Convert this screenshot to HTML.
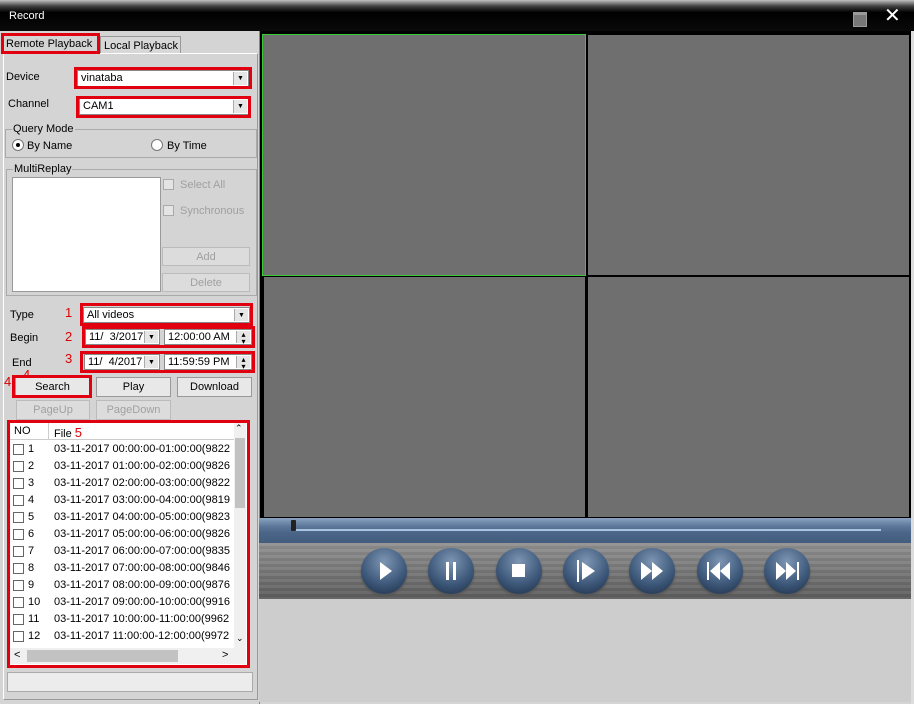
<!DOCTYPE html><html><head><style>
body{margin:0;width:914px;height:704px;overflow:hidden;background:#d4d4d4;font-family:"Liberation Sans",sans-serif;font-size:11px;color:#000;position:relative}
.a{position:absolute}
.red{position:absolute;border:3px solid #e00010;box-sizing:border-box}
.btn{position:absolute;background:#e8e8e8;border:1px solid #999;box-sizing:border-box;text-align:center;line-height:18px}
.dis{color:#a0a0a0;background:#dcdcdc;border-color:#bbb}
.inp{position:absolute;background:#fff;border:1px solid #888;box-sizing:border-box;padding-left:3px;line-height:15px}
.dd{position:absolute;right:1px;top:1px;width:13px;bottom:1px;background:#e6e6e6;border-left:1px solid #aaa;font-size:7px;text-align:center;line-height:14px}
.cb{position:absolute;width:11px;height:11px;border:1px solid #777;background:#fff;box-sizing:border-box}
.cell{position:absolute;background:#6f6f6f}
.circ{position:absolute;top:548px;width:46px;height:46px;border-radius:50%;background:radial-gradient(circle at 50% 30%,#7e96b4 0%,#3f5a7c 55%,#2b405c 80%,#8fb0d0 100%);box-shadow:0 2px 2px #555}
.circ svg{position:absolute;left:0;top:0}
.row{position:absolute;left:13px;height:17px;line-height:17px;width:220px;white-space:nowrap}
</style></head><body>
<div class="a" style="left:0;top:0;width:914px;height:31px;background:linear-gradient(#c0c0c0,#404040 20%,#000 40%,#0a0a0a)"></div>
<div class="a" style="left:9px;top:10px;color:#fff;font-size:11px">Record</div>
<div class="a" style="left:853px;top:12px;width:12px;height:11px;background:#777;border:1px solid #999;border-top-width:3px"></div>
<div class="a" style="left:884px;top:6px;color:#fff;font-size:20px;line-height:20px">✕</div>

<div class="a" style="left:0;top:31px;width:259px;height:673px;background:#d4d4d4;border-right:1px solid #888"></div>
<div class="a" style="left:100px;top:36px;width:76px;height:17px;border:1px solid #999;border-bottom:none;background:#d8d8d8;line-height:19px;padding-left:3px">Local Playback</div>
<div class="a" style="left:3px;top:53px;width:253px;height:645px;border:1px solid #fff;border-right-color:#999;border-bottom-color:#999"></div>
<div class="red" style="left:1px;top:33px;width:99px;height:21px"></div>
<div class="a" style="left:6px;top:38px">Remote Playback</div>

<div class="a" style="left:6px;top:71px">Device</div>
<div class="inp" style="left:77px;top:70px;width:172px;height:17px">vinataba<div class="dd">▼</div></div>
<div class="red" style="left:74px;top:67px;width:178px;height:22px"></div>
<div class="a" style="left:8px;top:98px">Channel</div>
<div class="inp" style="left:79px;top:98px;width:170px;height:17px">CAM1<div class="dd">▼</div></div>
<div class="red" style="left:76px;top:96px;width:175px;height:22px"></div>

<div class="a" style="left:5px;top:129px;width:250px;height:27px;border:1px solid #aaa"></div>
<div class="a" style="left:12px;top:123px;background:#d4d4d4;padding:0 1px">Query Mode</div>
<div class="a" style="left:12px;top:139px;width:10px;height:10px;border-radius:50%;background:#fff;border:1px solid #777"></div>
<div class="a" style="left:16px;top:143px;width:4px;height:4px;border-radius:50%;background:#000"></div>
<div class="a" style="left:27px;top:140px">By Name</div>
<div class="a" style="left:151px;top:139px;width:10px;height:10px;border-radius:50%;background:#fff;border:1px solid #777"></div>
<div class="a" style="left:167px;top:140px">By Time</div>

<div class="a" style="left:6px;top:169px;width:249px;height:125px;border:1px solid #aaa"></div>
<div class="a" style="left:13px;top:163px;background:#d4d4d4;padding:0 1px">MultiReplay</div>
<div class="a" style="left:12px;top:177px;width:147px;height:113px;background:#fff;border:1px solid #999"></div>
<div class="cb" style="left:163px;top:179px;background:#e4e4e4;border-color:#aaa"></div>
<div class="a" style="left:180px;top:179px;color:#a0a0a0">Select All</div>
<div class="cb" style="left:163px;top:205px;background:#e4e4e4;border-color:#aaa"></div>
<div class="a" style="left:180px;top:205px;color:#a0a0a0">Synchronous</div>
<div class="btn dis" style="left:162px;top:247px;width:88px;height:19px">Add</div>
<div class="btn dis" style="left:162px;top:273px;width:88px;height:19px">Delete</div>

<div class="a" style="left:10px;top:309px">Type</div>
<div class="a" style="left:65px;top:305px;color:#d00;font-size:13px">1</div>
<div class="inp" style="left:83px;top:307px;width:167px;height:16px">All videos<div class="dd">▼</div></div>
<div class="red" style="left:80px;top:303px;width:173px;height:23px"></div>
<div class="a" style="left:10px;top:332px">Begin</div>
<div class="a" style="left:65px;top:329px;color:#d00;font-size:13px">2</div>
<div class="inp" style="left:85px;top:329px;width:75px;height:16px">11/&nbsp; 3/2017<div class="dd">▼</div></div>
<div class="inp" style="left:164px;top:329px;width:88px;height:16px">12:00:00 AM<div class="dd" style="font-size:8px;line-height:7px">▴<br>▾</div></div>
<div class="red" style="left:82px;top:326px;width:173px;height:22px"></div>
<div class="a" style="left:12px;top:357px">End</div>
<div class="a" style="left:65px;top:351px;color:#d00;font-size:13px">3</div>
<div class="inp" style="left:84px;top:354px;width:76px;height:16px">11/&nbsp; 4/2017<div class="dd">▼</div></div>
<div class="inp" style="left:164px;top:354px;width:88px;height:16px">11:59:59 PM<div class="dd" style="font-size:8px;line-height:7px">▴<br>▾</div></div>
<div class="red" style="left:80px;top:351px;width:175px;height:22px"></div>

<div class="a" style="left:4px;top:374px;color:#d00;font-size:13px">4</div>
<div class="a" style="left:23px;top:367px;color:#d00;font-size:13px">4</div>
<div class="btn" style="left:15px;top:377px;width:75px;height:20px">Search</div>
<div class="red" style="left:12px;top:375px;width:80px;height:23px"></div>
<div class="btn" style="left:96px;top:377px;width:75px;height:20px">Play</div>
<div class="btn" style="left:177px;top:377px;width:75px;height:20px">Download</div>
<div class="btn dis" style="left:16px;top:400px;width:74px;height:20px">PageUp</div>
<div class="btn dis" style="left:96px;top:400px;width:75px;height:20px">PageDown</div>

<div class="a" style="left:9px;top:422px;width:238px;height:244px;background:#fff"></div>
<div class="a" style="left:10px;top:423px;width:224px;height:16px;background:#fff;border-bottom:1px solid #ccc"></div>
<div class="a" style="left:48px;top:423px;width:1px;height:16px;background:#ccc"></div>
<div class="a" style="left:14px;top:425px">NO</div>
<div class="a" style="left:54px;top:425px">File <span style="color:#d00;font-size:13px">5</span></div>
<div class="a" style="left:234px;top:423px;width:12px;height:225px;background:#f0f0f0"></div>
<div class="a" style="left:235px;top:438px;width:10px;height:70px;background:#c2c2c2"></div>
<div class="a" style="left:235px;top:423px;font-size:9px">⌃</div>
<div class="a" style="left:236px;top:633px;font-size:9px">⌄</div>
<div class="a" style="left:10px;top:648px;width:236px;height:16px;background:#f0f0f0"></div>
<div class="a" style="left:27px;top:650px;width:151px;height:12px;background:#c2c2c2"></div>
<div class="a" style="left:14px;top:649px">&lt;</div>
<div class="a" style="left:222px;top:649px">&gt;</div>
<div id="rows"></div>
<div class="red" style="left:7px;top:420px;width:243px;height:248px"></div>
<div class="a" style="left:7px;top:672px;width:244px;height:18px;background:#ececec;border:1px solid #aaa"></div>

<div class="a" style="left:260px;top:31px;width:654px;height:489px;background:#000"></div>
<div class="a" style="left:911px;top:31px;width:3px;height:673px;background:#ddd"></div>
<div class="cell" style="left:263px;top:35px;width:322px;height:240px;outline:1px solid #3c3"></div>
<div class="cell" style="left:588px;top:35px;width:321px;height:240px"></div>
<div class="cell" style="left:264px;top:277px;width:321px;height:240px"></div>
<div class="cell" style="left:588px;top:277px;width:321px;height:240px"></div>
<div class="a" style="left:259px;top:518px;width:652px;height:25px;background:linear-gradient(#8aa3c2,#5a7597 35%,#4a6587 60%,#435d7e)"></div>
<div class="a" style="left:292px;top:529px;width:589px;height:2px;background:#a8c4e2"></div>
<div class="a" style="left:291px;top:520px;width:5px;height:11px;background:#222;border-radius:1px"></div>
<div class="a" style="left:259px;top:543px;width:652px;height:56px;background:linear-gradient(#909090,#7c7c7c 40%,#5c5c5c)"></div>
<div class="a" style="left:259px;top:543px;width:652px;height:56px;background:repeating-linear-gradient(rgba(255,255,255,0.06) 0,rgba(255,255,255,0.06) 3px,rgba(0,0,0,0.04) 3px,rgba(0,0,0,0.04) 6px)"></div>
<div class="a" style="left:259px;top:599px;width:652px;height:103px;background:#cdcdcd"></div>

<div class="circ" style="left:361px"><svg width="46" height="46"><path d="M19 14 L31 23 L19 32Z" fill="#fff"/></svg></div>
<div class="circ" style="left:428px"><svg width="46" height="46"><rect x="18" y="14" width="3" height="18" fill="#fff"/><rect x="25" y="14" width="3" height="18" fill="#fff"/></svg></div>
<div class="circ" style="left:496px"><svg width="46" height="46"><rect x="16" y="16" width="13" height="13" fill="#fff"/></svg></div>
<div class="circ" style="left:563px"><svg width="46" height="46"><rect x="14" y="12" width="2" height="22" fill="#fff"/><path d="M19 14 L32 23 L19 32Z" fill="#fff"/></svg></div>
<div class="circ" style="left:629px"><svg width="46" height="46"><path d="M12 14 L23 23 L12 32Z M23 14 L34 23 L23 32Z" fill="#fff"/></svg></div>
<div class="circ" style="left:697px"><svg width="46" height="46"><rect x="10" y="14" width="2" height="18" fill="#fff"/><path d="M23 14 L13 23 L23 32Z M33 14 L23 23 L33 32Z" fill="#fff"/></svg></div>
<div class="circ" style="left:764px"><svg width="46" height="46"><path d="M12 14 L22 23 L12 32Z M22 14 L32 23 L22 32Z" fill="#fff"/><rect x="33" y="14" width="2" height="18" fill="#fff"/></svg></div>

<script>
var s=["9822","9826","9822","9819","9823","9826","9835","9846","9876","9916","9962","9972"],h="";
for(var i=0;i<12;i++){var a=("0"+i).slice(-2),b=("0"+(i+1)).slice(-2);
h+='<div class="row" style="top:'+(441+i*17)+'px"><span class="cb" style="left:0;top:3px;border-color:#666"></span><span class="a" style="left:15px">'+(i+1)+'</span><span class="a" style="left:41px">03-11-2017 '+a+':00:00-'+b+':00:00('+s[i]+'</span></div>';}
document.getElementById("rows").innerHTML=h;
</script>
</body></html>
